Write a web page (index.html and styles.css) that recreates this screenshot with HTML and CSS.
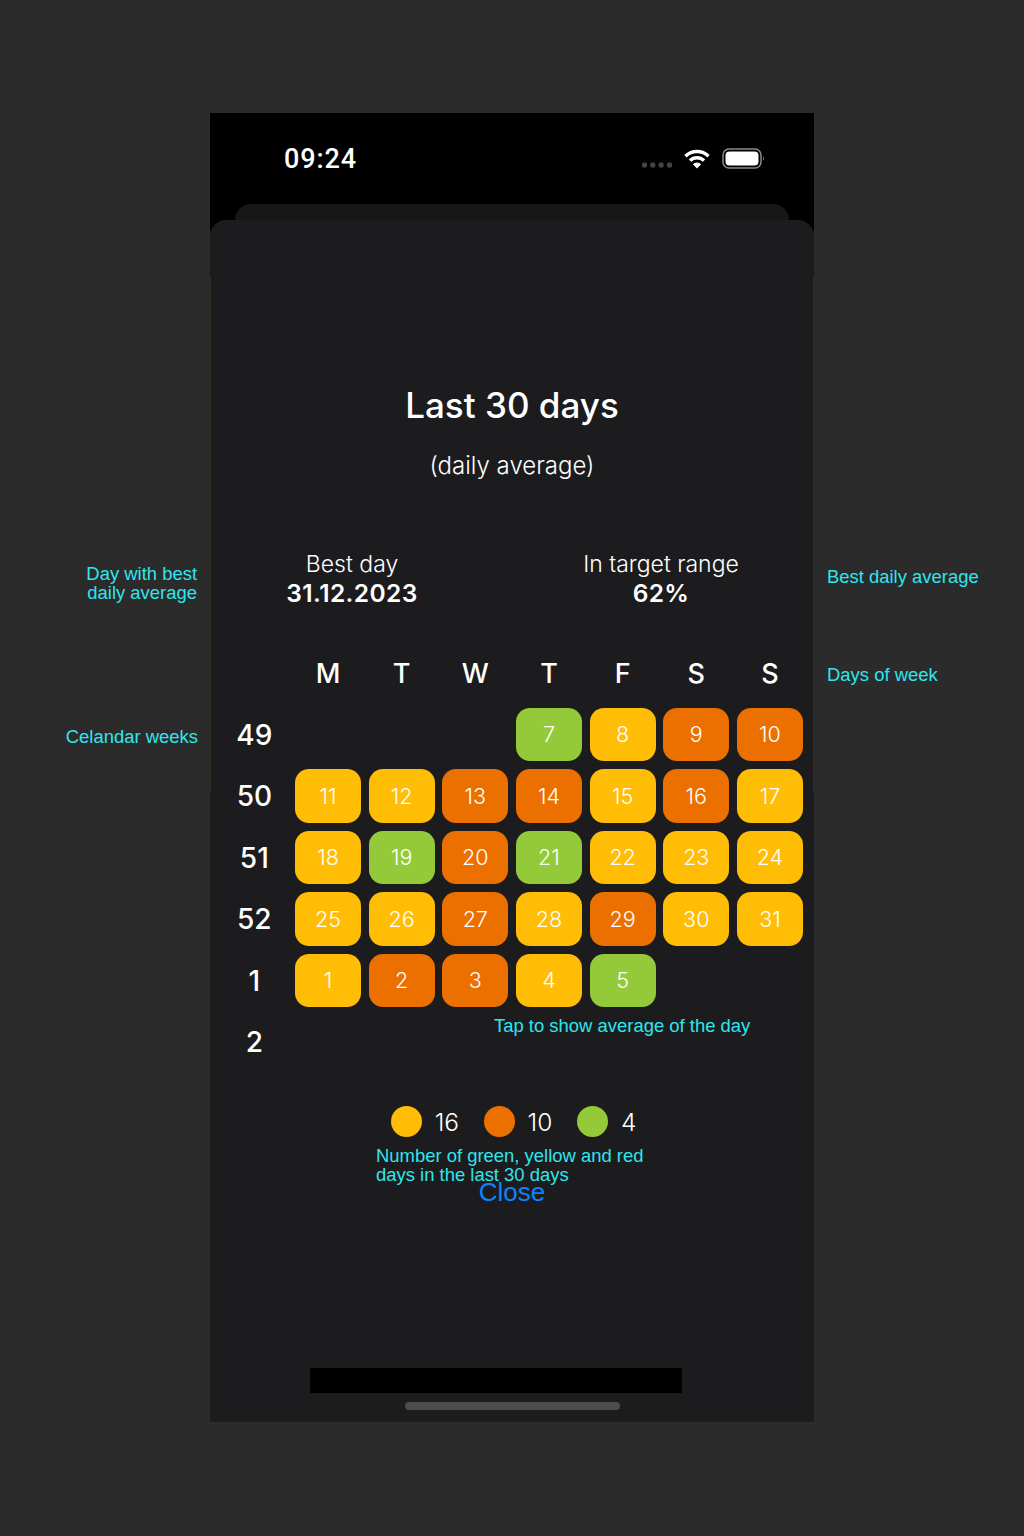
FILE: index.html
```html
<!DOCTYPE html>
<html lang="en">
<head>
    <meta charset="UTF-8">
    <meta name="viewport" content="width=device-width, initial-scale=1.0">
    <title>Last 30 days</title>
    <link rel="stylesheet" href="styles.css">
</head>
<body>
    <div class="phone">
        <div class="status-bar">
            <span class="time">09:24</span>
            <div class="status-icons">
                <svg class="signal" width="30" height="6" viewBox="0 0 30 6"><rect x="0" y="0.500" width="5" height="5" rx="1.500"/><rect x="8.300" y="0.500" width="5" height="5" rx="1.500"/><rect x="16.600" y="0.500" width="5" height="5" rx="1.500"/><rect x="25" y="0.500" width="5" height="5" rx="1.500"/></svg>
                <svg class="wifi" width="26" height="20" viewBox="0 0 26 20"><path d="M1.5 7.2a16.5 16.5 0 0 1 23 0" /><path d="M6 11.6a10 10 0 0 1 14 0"/><path class="wifi-dot" d="M13 19.5l-4.2-4.3a6 6 0 0 1 8.4 0z"/></svg>
                <svg class="battery" width="44" height="22" viewBox="0 0 44 22"><rect class="battery-case" x="1" y="1" width="38" height="19" rx="6"/><rect class="battery-fill" x="3.5" y="3.5" width="33" height="14" rx="4"/><path class="battery-cap" d="M41 8.500c1.600.4 1.600 3.600 0 4z"/></svg>
            </div>
        </div>
        <div class="back-sheet"></div>
        <div class="sheet">
            <h1>Last 30 days</h1>
            <p class="subtitle">(daily average)</p>

            <div class="stats">
                <div class="stat stat-day">
                    <span class="stat-label">Best day</span>
                    <strong>31.12.2023</strong>
                </div>
                <div class="stat stat-range">
                    <span class="stat-label">In target range</span>
                    <strong>62%</strong>
                </div>
            </div>

            <div class="calendar">
                <span></span>
                <span class="dow">M</span><span class="dow">T</span><span class="dow">W</span><span class="dow">T</span><span class="dow">F</span><span class="dow">S</span><span class="dow">S</span>

                <span class="week">49</span>
                <span></span><span></span><span></span>
                <span class="day green">7</span><span class="day yellow">8</span><span class="day orange">9</span><span class="day orange">10</span>

                <span class="week">50</span>
                <span class="day yellow">11</span><span class="day yellow">12</span><span class="day orange">13</span><span class="day orange">14</span><span class="day yellow">15</span><span class="day orange">16</span><span class="day yellow">17</span>

                <span class="week">51</span>
                <span class="day yellow">18</span><span class="day green">19</span><span class="day orange">20</span><span class="day green">21</span><span class="day yellow">22</span><span class="day yellow">23</span><span class="day yellow">24</span>

                <span class="week">52</span>
                <span class="day yellow">25</span><span class="day yellow">26</span><span class="day orange">27</span><span class="day yellow">28</span><span class="day orange">29</span><span class="day yellow">30</span><span class="day yellow">31</span>

                <span class="week">1</span>
                <span class="day yellow">1</span><span class="day orange">2</span><span class="day orange">3</span><span class="day yellow">4</span><span class="day green">5</span>
                <span></span><span></span>

                <span class="week">2</span>
            </div>

            <div class="legend">
                <span class="dot yellow"></span><span class="count">16</span>
                <span class="dot orange"></span><span class="count">10</span>
                <span class="dot green"></span><span class="count">4</span>
            </div>
            <p class="note note-legend">Number of green, yellow and red<br>days in the last 30 days</p>
            <button class="close" type="button">Close</button>

            <div class="black-bar"></div>
            <div class="home-bar"></div>
        </div>

        <!-- annotations around the screen -->
        <p class="note note-best-day">Day with best<br>daily average</p>
        <p class="note note-best-avg">Best daily average</p>
        <p class="note note-dow">Days of week</p>
        <p class="note note-weeks">Celandar weeks</p>
        <p class="note note-tap">Tap to show average of the day</p>
    </div>
</body>
</html>
```
FILE: styles.css
```css
* {
    box-sizing: border-box;
}
body {
    margin: 0;
    height: 1536px;
    padding-top: 113px;
    background-color: #2b2b2b;
    font-family: Inter, "Liberation Sans", sans-serif;
    color: white;
    overflow: hidden;
}
.phone {
    position: relative;
    width: 604px;
    height: 1309px;
    margin-left: 210px;
    background-color: black;
}
.status-bar {
    display: flex;
    justify-content: space-between;
    align-items: center;
    height: 91px;
    padding: 0 48px 0 74px;
}
.time {
    margin-top: 1px;
    font-family: Roboto, sans-serif;
    font-size: 27px;
    font-weight: 500;
    letter-spacing: 0.9px;
}
.status-icons {
    display: flex;
    align-items: center;
    gap: 10px;
    margin-top: 1px;
}
.signal {
    fill: #444;
    margin-top: 12px;
    margin-right: 2px;
}
.wifi {
    margin-right: 2px;
    fill: none;
    stroke: white;
    stroke-width: 3.4;
}
.wifi-dot {
    fill: white;
    stroke: none;
}
.battery-case {
    fill: none;
    stroke: #8a8a8a;
    stroke-width: 1.5;
}
.battery-fill {
    fill: white;
}
.battery-cap {
    fill: #6a6a6a;
}
.back-sheet {
    height: 16px;
    margin: 0 25px;
    background-color: #171717;
    border-radius: 16px 16px 0 0;
}
.sheet {
    position: relative;
    display: flex;
    flex-direction: column;
    height: 1202px;
    background-color: #1c1c1e;
    border-radius: 16px 16px 0 0;
}
/* faint edge along the upper part of the sheet */
.sheet::before {
    content: "";
    position: absolute;
    top: 56px;
    left: 0;
    right: 0;
    height: 517px;
    border-left: 1px solid #2c2e22;
    border-right: 1px solid #2c2e22;
}
h1 {
    margin: 146px 0 0;
    text-align: center;
    font-size: 35px;
    line-height: 78px;
    font-weight: 500;
}
.subtitle {
    margin: 3px 0 0;
    text-align: center;
    font-size: 24px;
    line-height: 37px;
    font-weight: 300;
}
.stats {
    display: flex;
    margin-top: 66px;
}
.stat {
    display: flex;
    flex-direction: column;
    align-items: center;
    line-height: 29px;
}
.stat-day {
    width: 284px;
}
.stat-range {
    width: 274px;
    margin-left: 30px;
}
.stat-label {
    font-size: 23px;
    font-weight: 300;
}
.stat strong {
    font-size: 24.500px;
    font-weight: 600;
    letter-spacing: 0.4px;
}
.calendar {
    display: grid;
    grid-template-columns: repeat(8, 66px);
    grid-auto-rows: 53.500px;
    column-gap: 7.670px;
    row-gap: 8px;
    align-items: center;
    justify-items: center;
    margin-top: 38px;
    margin-left: 11.330px;
}
.dow {
    font-size: 27px;
    font-weight: 500;
    padding-top: 2px;
}
.week {
    font-size: 28px;
    font-weight: 500;
    padding-top: 1px;
}
.day {
    display: flex;
    align-items: center;
    justify-content: center;
    width: 100%;
    height: 100%;
    border-radius: 14px;
    font-size: 21.500px;
    font-weight: 300;
}
.yellow {
    background-color: #ffbd05;
}
.orange {
    background-color: #ec7000;
}
.green {
    background-color: #94c93a;
}
.legend {
    display: flex;
    align-items: center;
    justify-content: center;
    margin-top: 37px;
    padding-left: 3px;
    line-height: 32px;
}
.dot {
    width: 31px;
    height: 31px;
    border-radius: 50%;
}
.count {
    margin-left: 13px;
    margin-right: 24.500px;
    font-size: 24.500px;
    font-weight: 300;
}
.count:last-child {
    margin-right: 0;
}
.note {
    margin: 0;
    font-family: "Liberation Sans", Arial, sans-serif;
    font-size: 18.450px;
    line-height: 19px;
    color: #2fe5ee;
}
.note-legend {
    margin: 8px 0 0 166px;
}
.close {
    align-self: center;
    margin-top: -6px;
    padding: 0;
    border: none;
    background: none;
    font-family: "Liberation Sans", Arial, sans-serif;
    font-size: 26px;
    line-height: 28px;
    color: #0a84ff;
}
.black-bar {
    width: 372px;
    height: 25px;
    margin: 162px 0 0 100px;
    background-color: black;
}
.home-bar {
    width: 215px;
    height: 8px;
    margin: 9px 0 0 195px;
    background-color: #4d4d4d;
    border-radius: 4px;
}
.note-best-day,
.note-best-avg,
.note-dow,
.note-weeks,
.note-tap {
    position: absolute;
    white-space: nowrap;
}
.note-best-day {
    right: 617px;
    top: 451px;
    text-align: right;
}
.note-best-avg {
    left: 617px;
    top: 454px;
}
.note-dow {
    left: 617px;
    top: 552px;
}
.note-weeks {
    right: 616px;
    top: 614px;
}
.note-tap {
    left: 284px;
    top: 903px;
}
```
